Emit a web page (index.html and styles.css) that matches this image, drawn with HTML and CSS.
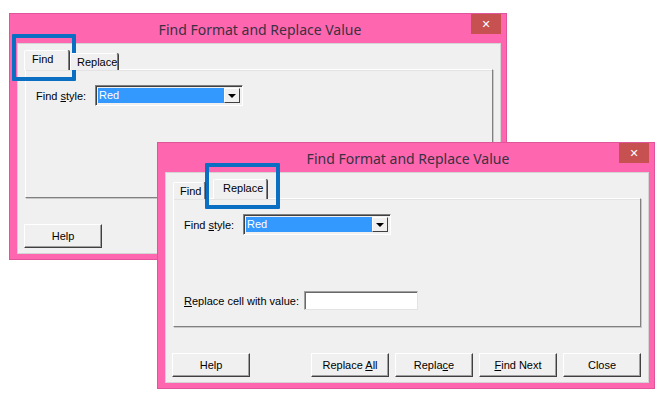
FILE: index.html
```html
<!DOCTYPE html>
<html>
<head>
    <title>Find Format and Replace Value</title>
    <link rel="stylesheet" href="styles.css">
</head>
<body>
    <div class="desktop">

        <!-- first dialog: Find tab -->
        <div class="window win-find">
            <div class="titlebar">
                <span class="title">Find Format and Replace Value</span>
                <span class="close-btn">&#x2715;</span>
            </div>
            <div class="client">
                <div class="tabs">
                    <div class="tab active tab-w1-find">Find</div>
                    <div class="tab tab-w1-replace">Replace</div>
                </div>
                <div class="panel">
                    <div class="row">
                        <span class="label">Find <u>s</u>tyle:</span>
                        <div class="combo">
                            <div class="combo-value">Red</div>
                            <div class="combo-arrow"></div>
                        </div>
                    </div>
                </div>
                <div class="footer">
                    <button class="btn">Help</button>
                </div>
            </div>
        </div>

        <!-- second dialog: Replace tab -->
        <div class="window win-replace">
            <div class="titlebar">
                <span class="title">Find Format and Replace Value</span>
                <span class="close-btn">&#x2715;</span>
            </div>
            <div class="client">
                <div class="tabs">
                    <div class="tab tab-w2-find">Find</div>
                    <div class="tab active tab-w2-replace">Replace</div>
                </div>
                <div class="panel">
                    <div class="row">
                        <span class="label">Find <u>s</u>tyle:</span>
                        <div class="combo">
                            <div class="combo-value">Red</div>
                            <div class="combo-arrow"></div>
                        </div>
                    </div>
                    <div class="row row-value">
                        <span class="label"><u>R</u>eplace cell with value:</span>
                        <div class="textbox"></div>
                    </div>
                </div>
                <div class="footer">
                    <button class="btn">Help</button>
                    <div class="btn-group">
                        <button class="btn">Replace <u>A</u>ll</button>
                        <button class="btn">Repla<u>c</u>e</button>
                        <button class="btn"><u>F</u>ind Next</button>
                        <button class="btn">Close</button>
                    </div>
                </div>
            </div>
        </div>

        <!-- blue call-out boxes over the tabs -->
        <div class="callout callout-find"></div>
        <div class="callout callout-replace"></div>
    </div>
</body>
</html>
```

FILE: styles.css
```css
:root {
    --frame-pink: #fe67b0;
    --frame-edge: #e0559a;
    --close-red: #c75050;
    --face: #f0f0f0;
    --shadow: #808080;
    --dark: #404040;
    --select-blue: #3399ff;
    --callout: #0a6fc2;
}

body {
    margin: 0;
    background: #fff;
    font-family: "Liberation Sans", Arial, sans-serif;
    font-size: 11px;
    color: #000;
}

.desktop {
    position: relative;
    width: 667px;
    height: 397px;
    overflow: hidden;
}

/* window frame */
.window {
    position: absolute;
    width: 498px;
    height: 247px;
    box-sizing: border-box;
    background: var(--frame-pink);
    border: 1px solid var(--frame-edge);
    padding: 0 5px 5px 7px;
    display: flex;
    flex-direction: column;
}

.win-find {
    left: 9px;
    top: 13px;
}

.win-replace {
    left: 157px;
    top: 142px;
}

.titlebar {
    position: relative;
    height: 29px;
    flex-shrink: 0;
    display: flex;
    align-items: center;
    justify-content: center;
}

.title {
    font-family: "Noto Sans", "Open Sans", sans-serif;
    font-size: 14px;
    color: #3a3042;
    margin-left: 2px;
    padding-top: 2px;
}

.close-btn {
    position: absolute;
    right: 0;
    top: 0;
    width: 30px;
    height: 20px;
    background: var(--close-red);
    color: #fff;
    font-family: "DejaVu Sans", sans-serif;
    font-size: 11px;
    font-weight: bold;
    display: flex;
    align-items: center;
    justify-content: center;
}

.client {
    flex: 1;
    background: var(--face);
    border: 1px solid #d4d4d4;
    display: flex;
    flex-direction: column;
    padding: 0 6px 5px 6px;
}

/* tab strip */
.tabs {
    display: flex;
    align-items: flex-end;
    height: 26px;
    position: relative;
    z-index: 1;
    margin-bottom: -1px;
}

.tab {
    box-sizing: border-box;
    height: 17px;
    line-height: 16px;
    padding-left: 6px;
    background: var(--face);
    border-top: 1px solid #fff;
    border-left: 1px solid #fff;
    border-right: 1px solid var(--shadow);
    box-shadow: 1px 0 0 var(--dark);
    border-radius: 2px 2px 0 0;
}

.tab.active {
    height: 20px;
    line-height: 17px;
}

.tab-w1-find {
    width: 45px;
    padding-left: 7px;
}

.tab-w1-replace {
    width: 48px;
    margin-left: 1px;
}

.tab-w2-find {
    width: 32px;
    margin-left: 1px;
}

.tab-w2-replace {
    width: 54px;
    margin-left: 8px;
    padding-left: 9px;
}

/* tab page */
.panel {
    height: 129px;
    box-sizing: border-box;
    margin: 0 1px;
    border-top: 1px solid #fff;
    border-left: 1px solid #fff;
    border-right: 1px solid var(--shadow);
    border-bottom: 1px solid var(--shadow);
    box-shadow: 1px 1px 0 #c8c8c8, inset 0 1px 0 #e3e3e3;
    padding: 15px 0 0 10px;
    display: flex;
    flex-direction: column;
}

.row {
    display: flex;
    align-items: center;
}

.label {
    width: 59px;
}

.row-value {
    margin-top: 56px;
}

.row-value .label {
    width: 120px;
}

.combo {
    width: 148px;
    height: 21px;
    box-sizing: border-box;
    border: 1px solid var(--shadow);
    border-right-color: #fff;
    border-bottom-color: #fff;
    box-shadow: inset 1px 1px 0 var(--dark);
    padding: 2px;
    display: flex;
}

.combo-value {
    flex: 1;
    background: var(--select-blue);
    color: #fff;
    line-height: 15px;
    padding-left: 1px;
}

.combo-arrow {
    width: 16px;
    box-sizing: border-box;
    background: var(--face);
    border: 1px solid #fff;
    border-right-color: var(--dark);
    border-bottom-color: var(--dark);
    display: flex;
    align-items: center;
    justify-content: center;
}

.combo-arrow::after {
    content: "";
    border-left: 4px solid transparent;
    border-right: 4px solid transparent;
    border-top: 4px solid #000;
}

.textbox {
    width: 114px;
    height: 19px;
    box-sizing: border-box;
    background: #fff;
    border: 1px solid #a0a0a0;
    border-right-color: #e3e3e3;
    border-bottom-color: #e3e3e3;
    box-shadow: inset 1px 1px 0 #696969;
}

/* bottom buttons */
.footer {
    margin-top: auto;
    display: flex;
    justify-content: space-between;
    padding-right: 1px;
}

.btn-group {
    display: flex;
    gap: 6px;
}

.btn {
    width: 78px;
    height: 24px;
    box-sizing: border-box;
    font: inherit;
    color: #000;
    background: var(--face);
    border: 1px solid #fff;
    border-right-color: var(--dark);
    border-bottom-color: var(--dark);
    box-shadow: inset -1px -1px 0 #a0a0a0;
    padding: 0;
}

/* blue call-outs drawn over the screenshot */
.callout {
    position: absolute;
    box-sizing: border-box;
    border: 4px solid var(--callout);
    border-radius: 1px;
}

.callout-find {
    left: 12px;
    top: 34px;
    width: 64px;
    height: 47px;
}

.callout-replace {
    left: 205px;
    top: 163px;
    width: 75px;
    height: 46px;
}
```
